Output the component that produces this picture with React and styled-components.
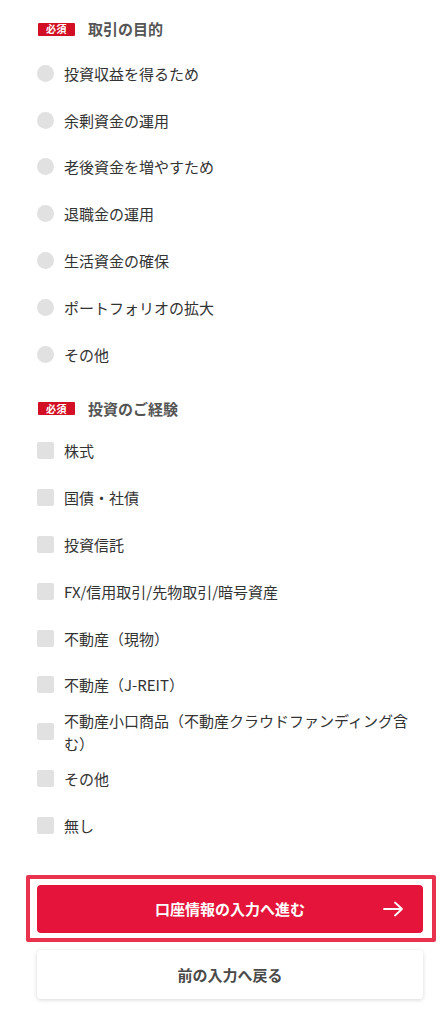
import React from "react";
import styled, { createGlobalStyle } from "styled-components";

const Global = createGlobalStyle`
  html, body { margin: 0; padding: 0; background: #fff; }
  body {
    font-family: "Noto Sans CJK JP", "Noto Sans", "Liberation Sans", sans-serif;
    color: #333;
    -webkit-font-smoothing: antialiased;
  }
`;

const Page = styled.main`
  width: 448px;
  box-sizing: border-box;
  padding: 21px 25px 24px 37px;
  display: flex;
  flex-direction: column;
`;

const Section = styled.section`
  display: flex;
  flex-direction: column;
  margin-top: ${(p) => p.$mt || 0}px;
`;

const Header = styled.div`
  display: flex;
  align-items: center;
  gap: 13px;
  height: 16px;
  margin-bottom: ${(p) => p.$mb}px;
  padding-left: 1px;
`;

const Badge = styled.span`
  display: inline-flex;
  align-items: center;
  justify-content: center;
  width: 37px;
  height: 13px;
  background: #d20f24;
  color: #fff;
  font-size: 10px;
  font-weight: 700;
  border-radius: 1px;
  letter-spacing: 0.5px;
  line-height: 1;
`;

const Title = styled.span`
  font-size: 15px;
  font-weight: 700;
  color: #555;
  line-height: 16px;
`;

const Option = styled.label`
  display: flex;
  align-items: center;
  gap: 10px;
  min-height: 46.8px;
`;

const RadioDot = styled.span`
  flex: none;
  width: 17px;
  height: 17px;
  border-radius: 50%;
  background: #e1e1e1;
`;

const CheckBox = styled.span`
  flex: none;
  width: 17px;
  height: 17px;
  border-radius: 2px;
  background: #e1e1e1;
`;

const Label = styled.span`
  font-size: 15px;
  line-height: 23px;
  color: #333;
`;

const Actions = styled.div`
  display: flex;
  flex-direction: column;
  margin-top: 26px;
`;

const FocusRing = styled.div`
  border: 4px solid #e9324e;
  border-radius: 2px;
  padding: 6px 9px 5px 7px;
  margin: 0 -13px 0 -11px;
`;

const PrimaryButton = styled.button`
  position: relative;
  width: 100%;
  height: 48px;
  border: none;
  border-radius: 4px;
  background: #e4143b;
  color: #fff;
  font-family: inherit;
  font-size: 15px;
  font-weight: 700;
  display: flex;
  align-items: center;
  justify-content: center;
  cursor: pointer;
`;

const Arrow = styled.svg`
  position: absolute;
  right: 19px;
  top: 50%;
  transform: translateY(-50%);
`;

const SecondaryButton = styled.button`
  margin-top: 8px;
  width: 100%;
  height: 49px;
  border: none;
  border-radius: 4px;
  background: #fff;
  box-shadow: 0 1px 4px rgba(0, 0, 0, 0.16);
  color: #4a4a4a;
  font-family: inherit;
  font-size: 15px;
  font-weight: 700;
  cursor: pointer;
`;

const purposes = [
  "投資収益を得るため",
  "余剰資金の運用",
  "老後資金を増やすため",
  "退職金の運用",
  "生活資金の確保",
  "ポートフォリオの拡大",
  "その他",
];

const experiences = [
  "株式",
  "国債・社債",
  "投資信託",
  "FX/信用取引/先物取引/暗号資産",
  "不動産（現物）",
  "不動産（J-REIT）",
  "不動産小口商品（不動産クラウドファンディング含む）",
  "その他",
  "無し",
];

export default function App() {
  return (
    <>
      <Global />
      <Page>
        <Section>
          <Header $mb={13}>
            <Badge>必須</Badge>
            <Title>取引の目的</Title>
          </Header>
          {purposes.map((p) => (
            <Option key={p}>
              <RadioDot />
              <Label>{p}</Label>
            </Option>
          ))}
        </Section>
        <Section $mt={23}>
          <Header $mb={11}>
            <Badge>必須</Badge>
            <Title>投資のご経験</Title>
          </Header>
          {experiences.map((e, i) => (
            <Option key={i}>
              <CheckBox />
              <Label>{e}</Label>
            </Option>
          ))}
        </Section>
        <Actions>
          <FocusRing>
            <PrimaryButton>
              口座情報の入力へ進む
              <Arrow width="21" height="16" viewBox="0 0 21 16" fill="none">
                <path
                  d="M1 8h18M12 1.5L19 8l-7 6.5"
                  stroke="#fff"
                  strokeWidth="1.8"
                  strokeLinecap="round"
                  strokeLinejoin="round"
                />
              </Arrow>
            </PrimaryButton>
          </FocusRing>
          <SecondaryButton>前の入力へ戻る</SecondaryButton>
        </Actions>
      </Page>
    </>
  );
}
